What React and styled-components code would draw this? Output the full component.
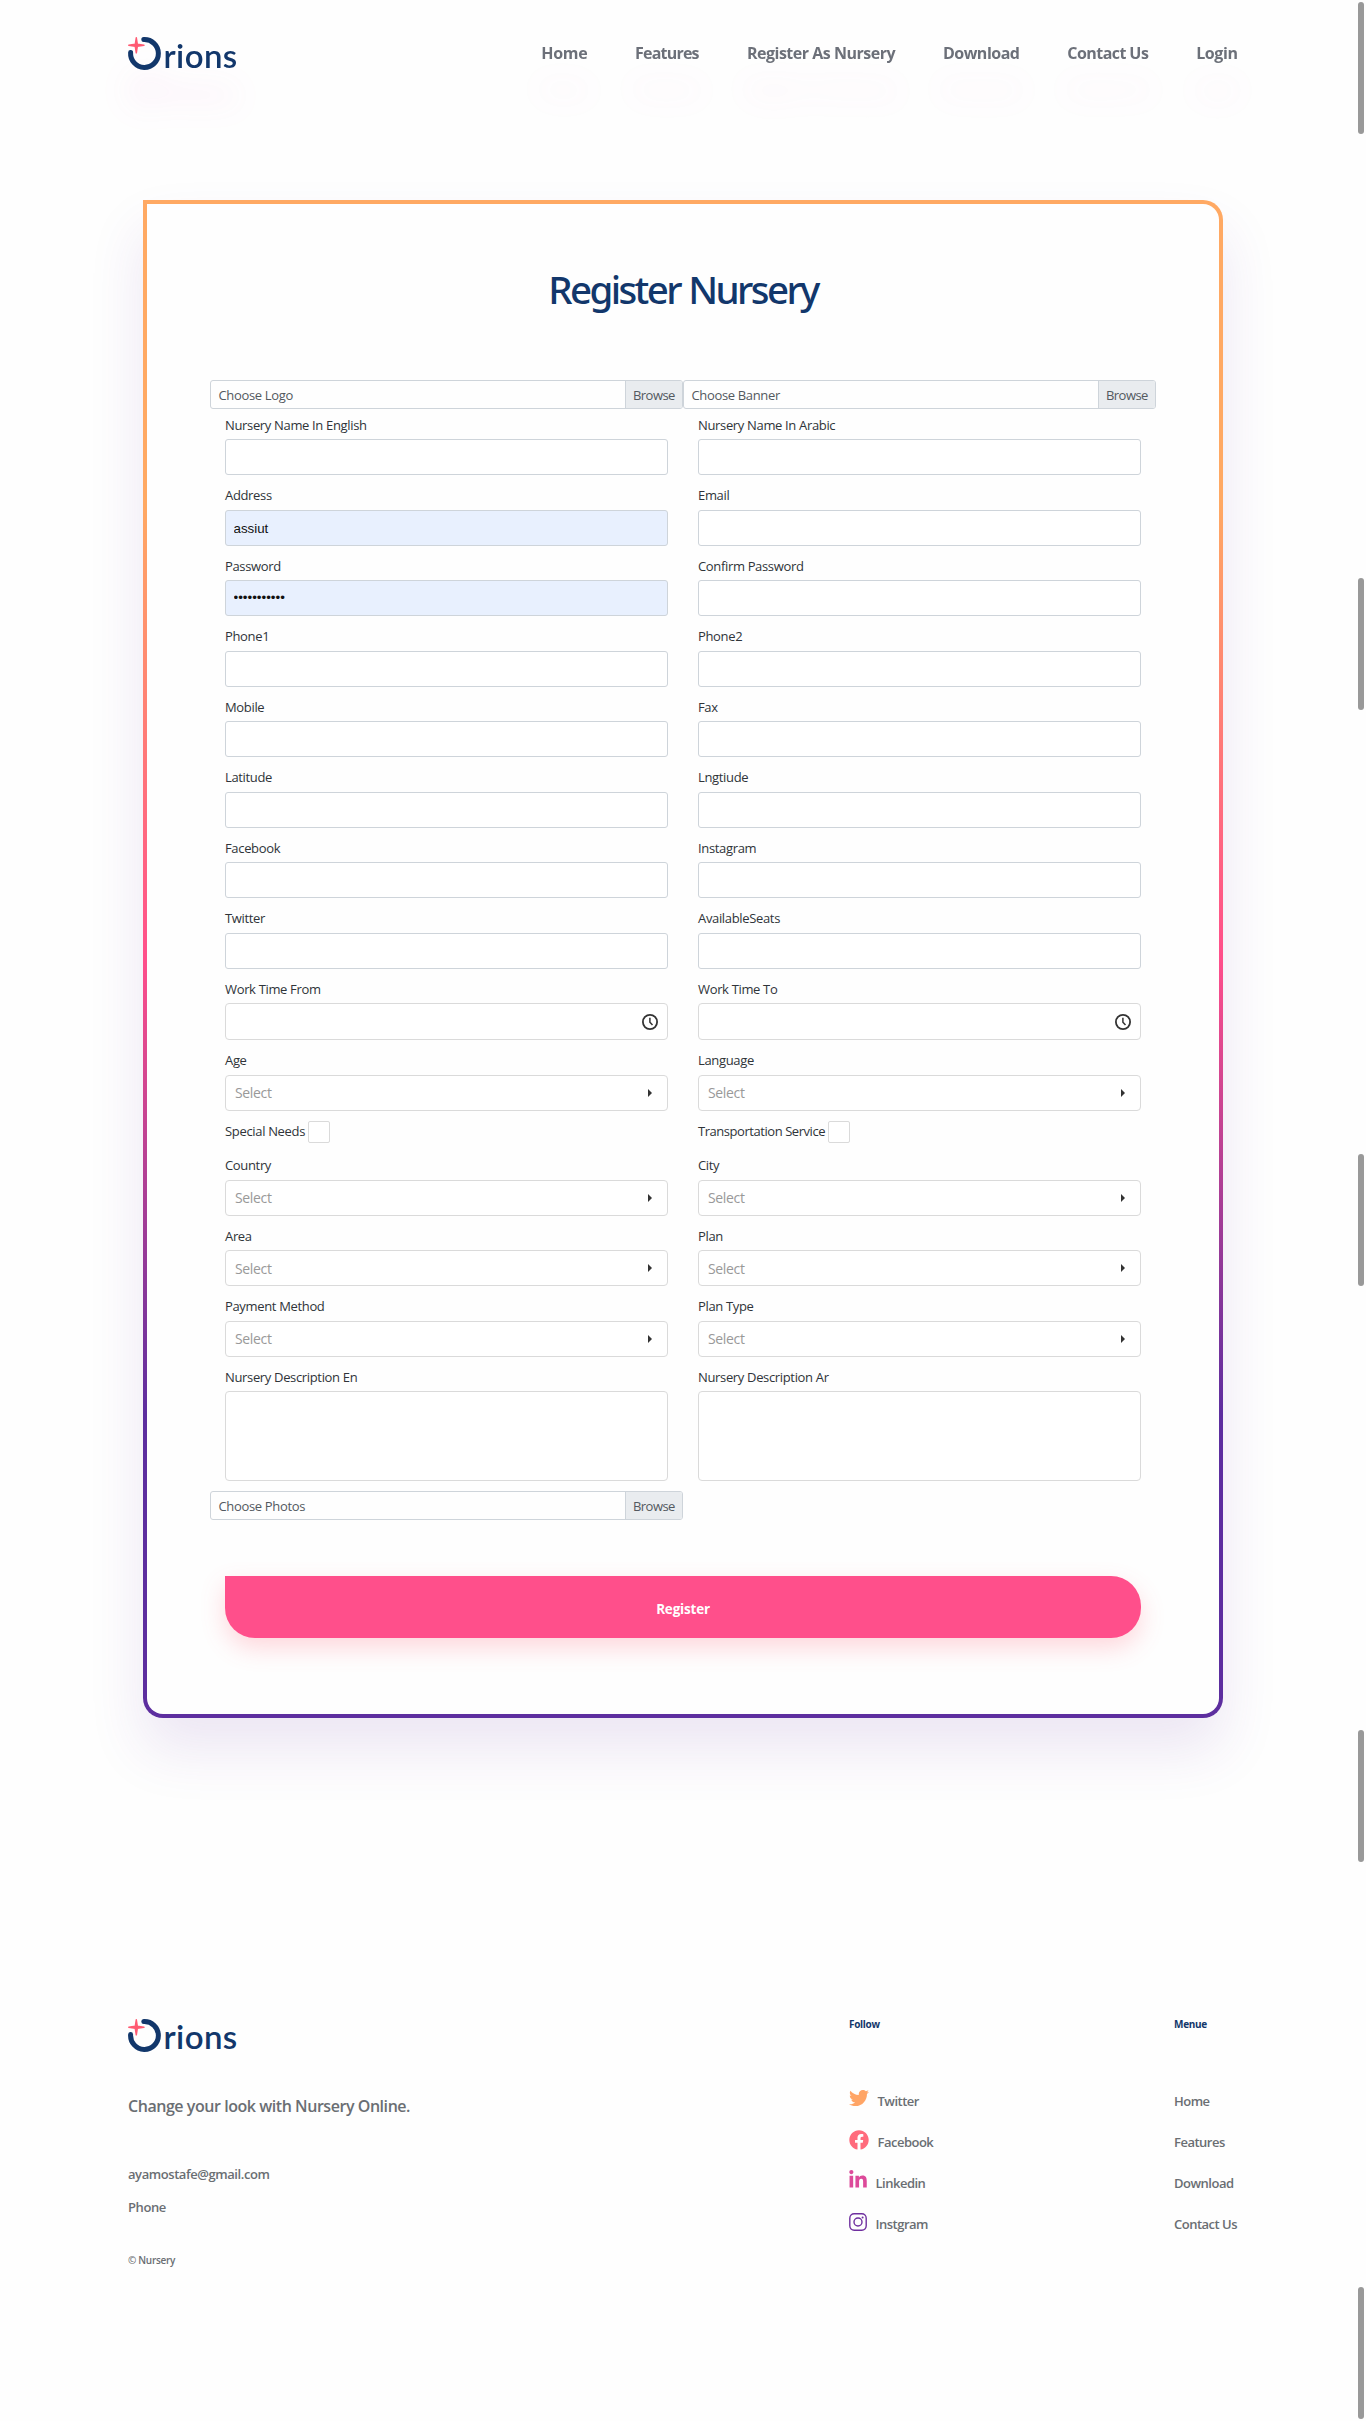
import React from "react";
import styled, { createGlobalStyle } from "styled-components";
import { FaTwitter, FaFacebook, FaLinkedinIn } from "react-icons/fa";

const GlobalStyle = createGlobalStyle`
  *, *::before, *::after { box-sizing: border-box; }
  body {
    margin: 0;
    background: #fefefe;
    color: #2f3439;
    font-family: "Open Sans", "Noto Sans", sans-serif;
    font-size: 13px;
  }
`;

const Page = styled.div`
  position: relative;
  width: 1366px;
  height: 2421px;
  overflow: hidden;
`;

const Header = styled.header`
  display: flex;
  justify-content: space-between;
  align-items: flex-start;
  height: 200px;
  padding: 37px 128px 0;
`;

const LogoLink = styled.a`
  display: flex;
  width: 109px;
  height: 34px;
  color: #12376b;
  filter: ${(p) => (p.$glow ? "drop-shadow(0 36px 15px rgba(225, 60, 180, 0.12))" : "none")};
`;

const LogoMark = styled.svg`
  width: 34px;
  height: 34px;
  flex: none;
  overflow: visible;
`;

const LogoWord = styled.span`
  margin: -2.5px 0 0 1.5px;
  font: 600 33px/40px Lato, sans-serif;
  letter-spacing: 0.4px;
`;

const Nav = styled.nav`
  display: flex;
  gap: 47.4px;
  margin-top: 4px;
`;

const NavLink = styled.a`
  color: #6c7079;
  font-size: 16px;
  font-weight: 700;
  line-height: 24px;
  letter-spacing: ${(p) => p.$track}px;
  margin-right: ${(p) => -p.$track}px;
  filter: drop-shadow(0 36px 14px rgba(225, 60, 180, 0.09));
`;

const Card = styled.main`
  width: 1080px;
  height: 1518px;
  margin-left: 143px;
  padding: 55px 63px 76px;
  border: 4px solid transparent;
  border-radius: 0 20px 20px 20px;
  background:
    linear-gradient(#fefefe, #fefefe) padding-box,
    linear-gradient(#ffa963 20%, #ff4f8b 50%, #5d2e9f 80%) border-box;
  box-shadow: 0 32px 56px rgba(93, 46, 159, 0.115);
`;

const Title = styled.h1`
  margin: 0 0 61px;
  color: #12376b;
  font-family: "Noto Sans", sans-serif;
  font-size: 38.5px;
  font-weight: 500;
  line-height: 60px;
  letter-spacing: -2.6px;
  word-spacing: 1px;
  text-align: center;
`;

const FileRow = styled.div`
  display: grid;
  grid-template-columns: 473px 473px;
  margin-bottom: ${(p) => p.$below}px;
`;

const FileInput = styled.label`
  display: flex;
  justify-content: space-between;
  height: 29px;
  overflow: hidden;
  border: 1px solid #ced4da;
  border-radius: 3px;
  color: #53595f;
  line-height: 28px;
  letter-spacing: -0.34px;
`;

const FileText = styled.span`
  padding-left: 7.5px;
`;

const Browse = styled.span`
  width: 57px;
  padding-left: 7px;
  border-left: 1px solid #ced4da;
  background: #e9ecef;
  letter-spacing: -0.55px;
`;

const Fields = styled.div`
  display: grid;
  grid-template-columns: 443px 443px;
  column-gap: 30px;
  padding: 0 15px;
`;

const Field = styled.div`
  display: flex;
  flex-direction: column;
  padding-bottom: 10.5px;
`;

const Label = styled.label`
  height: 20px;
  margin: -0.25px 0 4.25px;
  line-height: 20px;
  letter-spacing: -0.34px;
`;

const Input = styled.input`
  width: 100%;
  height: 36px;
  padding: ${(p) => (p.type === "password" ? "0 7.5px 1px" : "2px 7.5px 0")};
  border: 1px solid #ced4da;
  border-radius: 3px;
  background: ${(p) => (p.$filled ? "#e8f0fe" : "#fff")};
  color: #111;
  font: 13.333px "Liberation Sans", Arial, sans-serif;
`;

const PickerBox = styled.div`
  display: flex;
  align-items: center;
  justify-content: space-between;
  height: ${(p) => p.$height}px;
  padding: 0 9px;
  border: 1px solid #dadada;
  border-radius: 4px;
  background: #fff;
  color: #999;
  font-size: 14px;
  letter-spacing: -0.35px;
`;

const ClockIcon = styled.svg`
  width: 16px;
  height: 16px;
  margin-left: auto;
`;

const Caret = styled.span`
  margin-right: 6px;
  border: 4px solid transparent;
  border-left-color: #333;
  border-right-width: 0;
`;

const CheckField = styled.div`
  display: flex;
  align-items: flex-start;
  height: 34.5px;
  gap: 3px;
  line-height: 21px;
  letter-spacing: ${(p) => p.$track}px;
`;

const CheckBox = styled.span`
  width: 22px;
  height: 22px;
  border: 1px solid #dadada;
  border-radius: 2px;
  background: #fff;
`;

const TextArea = styled.textarea`
  display: block;
  width: 100%;
  height: 90px;
  margin-bottom: -0.5px;
  border: 1px solid #dadada;
  border-radius: 4px;
  background: #fff;
  resize: none;
`;

const SubmitButton = styled.button`
  display: block;
  width: 916px;
  height: 62px;
  margin: 0 15px;
  padding: 3px 0 0;
  border: 0;
  border-radius: 0 30px 30px 30px;
  background: #ff4f8b;
  box-shadow: 0 10px 25px rgba(255, 88, 110, 0.23);
  color: #fff;
  font: 700 13.5px "Open Sans", sans-serif;
  letter-spacing: -0.2px;
`;

const Footer = styled.footer`
  display: grid;
  grid-template-columns: 721px 325px auto;
  padding: 298px 120px 0 128px;
  color: #6a6e73;
  font-weight: 600;
`;

const About = styled.div`
  display: flex;
  flex-direction: column;
  padding-top: 2.5px;
`;

const Tagline = styled.p`
  margin: 41px 0 46px;
  font-size: 16px;
  line-height: 24px;
  letter-spacing: -0.45px;
`;

const Contact = styled.span`
  margin-bottom: 13px;
  line-height: 20px;
  letter-spacing: -0.43px;
`;

const Copyright = styled.small`
  margin-top: 22px;
  font-size: 10px;
  line-height: 16px;
  letter-spacing: -0.3px;
`;

const FooterColumn = styled.div`
  display: flex;
  flex-direction: column;
  gap: 21px;
`;

const FooterHeading = styled.h2`
  margin: 0 0 38px;
  color: #12376b;
  font-size: 10px;
  font-weight: 700;
  line-height: 16px;
  letter-spacing: -0.3px;
`;

const FooterLink = styled.a`
  display: flex;
  gap: 8.5px;
  height: 20px;
  line-height: 20px;
  letter-spacing: -0.5px;
  white-space: nowrap;
`;

const SocialIcon = styled.span`
  display: flex;
  height: 20px;
  margin-top: ${(p) => p.$lift}px;
  color: ${(p) => p.$color};
`;

const LinkedinMark = styled(FaLinkedinIn)`
  width: 18px;
  height: 20px;
`;

const ScrollThumb = styled.span`
  position: absolute;
  top: ${(p) => p.$top}px;
  right: 2px;
  width: 6px;
  height: 132px;
  border-radius: 3px;
  background: #999;
`;

function Logo({ glow }) {
  return (
    <LogoLink $glow={glow}>
      <LogoMark viewBox="0 0 34 34" fill="none">
        <path d="M15.8 2.6A13.9 13.9 0 1 1 2.6 15.6" stroke="#12376b" strokeWidth="5" strokeLinecap="round" />
        <path
          d="M8.3 .8L9.3 7.3L15.9 8.3L9.3 9.3L8.3 15.8L7.3 9.3L.8 8.3L7.3 7.3Z"
          fill="#ff5a72"
          stroke="#ff5a72"
          strokeWidth="1.5"
          strokeLinejoin="round"
        />
      </LogoMark>
      <LogoWord>rions</LogoWord>
    </LogoLink>
  );
}

function Clock() {
  return (
    <ClockIcon viewBox="0 0 16 16" fill="none" stroke="#333" strokeWidth="1.8">
      <circle cx="8" cy="8" r="7.1" />
      <path d="M7.9 3.8V8.2L10.5 11" strokeWidth="1.5" />
    </ClockIcon>
  );
}

function InstagramMark() {
  return (
    <svg width="18" height="18" viewBox="0 0 18 18" fill="none" stroke="currentColor" strokeWidth="1.4">
      <rect x="0.8" y="0.8" width="16.4" height="16.4" rx="4.4" />
      <circle cx="9" cy="9" r="4" />
      <circle cx="13.6" cy="4.4" r="1" fill="currentColor" stroke="none" />
    </svg>
  );
}

const TextField = ({ label, ...rest }) => (
  <Field>
    <Label>{label}</Label>
    <Input {...rest} />
  </Field>
);

const SelectField = ({ label }) => (
  <Field>
    <Label>{label}</Label>
    <PickerBox $height={36}>
      Select
      <Caret />
    </PickerBox>
  </Field>
);

const TimeField = ({ label }) => (
  <Field>
    <Label>{label}</Label>
    <PickerBox $height={37}>
      <Clock />
    </PickerBox>
  </Field>
);

const FilePicker = ({ text }) => (
  <FileInput>
    <FileText>{text}</FileText>
    <Browse>Browse</Browse>
  </FileInput>
);

const navItems = [
  ["Home", -0.29],
  ["Features", -0.8],
  ["Register As Nursery", -0.49],
  ["Download", -0.5],
  ["Contact Us", -0.57],
  ["Login", -0.4],
];

const laterTextFields = [
  "Phone1", "Phone2", "Mobile", "Fax", "Latitude", "Lngtiude",
  "Facebook", "Instagram", "Twitter", "AvailableSeats",
];

const thumbs = [2, 577.5, 1153.5, 1729.5, 2287];

export default function App() {
  return (
    <Page>
      <GlobalStyle />
      <Header>
        <Logo glow />
        <Nav>
          {navItems.map(([name, track]) => (
            <NavLink key={name} $track={track}>{name}</NavLink>
          ))}
        </Nav>
      </Header>

      <Card>
        <Title>Register Nursery</Title>
        <FileRow $below={6}>
          <FilePicker text="Choose Logo" />
          <FilePicker text="Choose Banner" />
        </FileRow>
        <Fields>
          <TextField label="Nursery Name In English" />
          <TextField label="Nursery Name In Arabic" />
          <TextField label="Address" defaultValue="assiut" $filled />
          <TextField label="Email" />
          <TextField label="Password" type="password" defaultValue="nursery2020" $filled />
          <TextField label="Confirm Password" type="password" />
          {laterTextFields.map((name) => (
            <TextField key={name} label={name} />
          ))}
          <TimeField label="Work Time From" />
          <TimeField label="Work Time To" />
          <SelectField label="Age" />
          <SelectField label="Language" />
          <CheckField $track={-0.33}>Special Needs<CheckBox /></CheckField>
          <CheckField $track={-0.45}>Transportation Service<CheckBox /></CheckField>
          {["Country", "City", "Area", "Plan", "Payment Method", "Plan Type"].map((name) => (
            <SelectField key={name} label={name} />
          ))}
          <Field>
            <Label>Nursery Description En</Label>
            <TextArea />
          </Field>
          <Field>
            <Label>Nursery Description Ar</Label>
            <TextArea />
          </Field>
        </Fields>
        <FileRow $below={56}>
          <FilePicker text="Choose Photos" />
        </FileRow>
        <SubmitButton>Register</SubmitButton>
      </Card>

      <Footer>
        <About>
          <Logo />
          <Tagline>Change your look with Nursery Online.</Tagline>
          <Contact>ayamostafe@gmail.com</Contact>
          <Contact>Phone</Contact>
          <Copyright>© Nursery</Copyright>
        </About>
        <FooterColumn>
          <FooterHeading>Follow</FooterHeading>
          <FooterLink>
            <SocialIcon $color="#ffa566" $lift={-3}><FaTwitter size={20} /></SocialIcon>
            Twitter
          </FooterLink>
          <FooterLink>
            <SocialIcon $color="#ff6b7c" $lift={-2.5}><FaFacebook size={20} /></SocialIcon>
            Facebook
          </FooterLink>
          <FooterLink>
            <SocialIcon $color="#dd4a9a" $lift={-3.5}><LinkedinMark /></SocialIcon>
            Linkedin
          </FooterLink>
          <FooterLink>
            <SocialIcon $color="#6f2f9f" $lift={-1.5}><InstagramMark /></SocialIcon>
            Instgram
          </FooterLink>
        </FooterColumn>
        <FooterColumn>
          <FooterHeading>Menue</FooterHeading>
          {["Home", "Features", "Download", "Contact Us"].map((name) => (
            <FooterLink key={name}>{name}</FooterLink>
          ))}
        </FooterColumn>
      </Footer>

      {thumbs.map((top) => (
        <ScrollThumb key={top} $top={top} />
      ))}
    </Page>
  );
}
